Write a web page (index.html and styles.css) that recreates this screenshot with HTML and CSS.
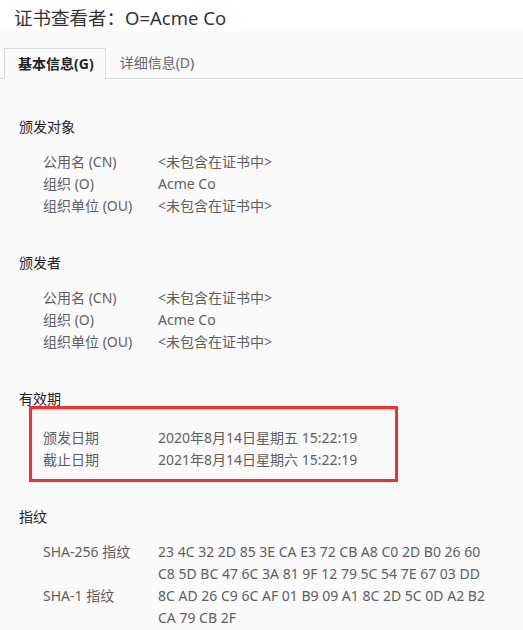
FILE: index.html
```html
<!DOCTYPE html>
<html lang="zh-CN">
<head>
    <meta charset="UTF-8">
    <title>证书查看者</title>
    <link rel="stylesheet" href="styles.css">
</head>
<body>

    <div class="title-bar">证书查看者：O=Acme Co</div>

    <div class="viewer">
        <div class="tabs">
            <div class="tab active">基本信息(G)</div>
            <div class="tab">详细信息(D)</div>
        </div>

        <div class="panel">
            <div class="section">
                <h3>颁发对象</h3>
                <div class="row"><span class="label">公用名 (CN)</span><span class="value">&lt;未包含在证书中&gt;</span></div>
                <div class="row"><span class="label">组织 (O)</span><span class="value">Acme Co</span></div>
                <div class="row"><span class="label">组织单位 (OU)</span><span class="value">&lt;未包含在证书中&gt;</span></div>
            </div>

            <div class="section">
                <h3>颁发者</h3>
                <div class="row"><span class="label">公用名 (CN)</span><span class="value">&lt;未包含在证书中&gt;</span></div>
                <div class="row"><span class="label">组织 (O)</span><span class="value">Acme Co</span></div>
                <div class="row"><span class="label">组织单位 (OU)</span><span class="value">&lt;未包含在证书中&gt;</span></div>
            </div>

            <div class="section">
                <h3>有效期</h3>
                <!-- 标注框 -->
                <div class="highlight">
                    <div class="row"><span class="label">颁发日期</span><span class="value">2020年8月14日星期五 15:22:19</span></div>
                    <div class="row"><span class="label">截止日期</span><span class="value">2021年8月14日星期六 15:22:19</span></div>
                </div>
            </div>

            <div class="section">
                <h3>指纹</h3>
                <div class="row"><span class="label">SHA-256 指纹</span><span class="value">23 4C 32 2D 85 3E CA E3 72 CB A8 C0 2D B0 26 60<br>C8 5D BC 47 6C 3A 81 9F 12 79 5C 54 7E 67 03 DD</span></div>
                <div class="row"><span class="label">SHA-1 指纹</span><span class="value">8C AD 26 C9 6C AF 01 B9 09 A1 8C 2D 5C 0D A2 B2<br>CA 79 CB 2F</span></div>
            </div>
        </div>
    </div>

</body>
</html>
```

FILE: styles.css
```css
body {
    margin: 0;
    padding: 0;
    font-family: "Noto Sans", "Noto Sans CJK SC", sans-serif;
    background-color: #fafafa;
    color: #5f5f5f;
    font-size: 14px;
    overflow: hidden;
}

.title-bar {
    height: 31px;
    line-height: 36px;
    padding-left: 14px;
    background-color: white;
    color: #333;
    font-size: 18.5px;
}

.viewer {
    padding-top: 17px;
}

.tabs {
    display: flex;
    height: 30px;
    padding-left: 4px;
    border-bottom: 1px solid #d9d9d9;
}

.tab {
    padding: 0 14px;
    line-height: 30px;
    color: #666;
}

.tab.active {
    padding: 0 11px 0 13px;
    border: 1px solid #d9d9d9;
    border-bottom: none;
    margin-bottom: -1px;
    background-color: #fafafa;
    color: #222;
    font-weight: bold;
}

.panel {
    padding: 37px 0 0 19px;
}

.section {
    margin-bottom: 35px;
}

h3 {
    margin: 0 0 13px 0;
    font-size: 14px;
    font-weight: normal;
    line-height: 22px;
    color: #1f1f1f;
}

.row {
    display: flex;
    padding-left: 24px;
    line-height: 22px;
}

.label {
    width: 115px;
    flex-shrink: 0;
}

.highlight {
    width: 363px;
    margin: -17px 0 -11px 10px;
    padding: 18px 0 8px 0;
    border: 3px solid #ff2b2b;
}

.highlight .row {
    padding-left: 11px;
}
```
